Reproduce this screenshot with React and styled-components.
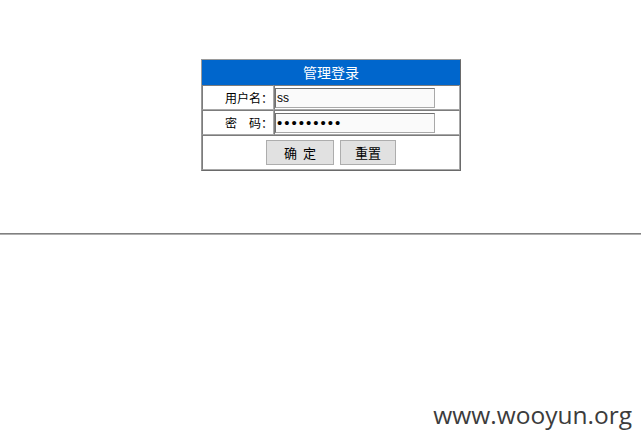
import React from "react"
import styled, { createGlobalStyle } from "styled-components"

const GlobalStyle = createGlobalStyle`
  html, body {
    margin: 0;
    padding: 0;
    background: #fff;
  }
  body {
    font-family: "Noto Sans CJK SC", "Liberation Sans", sans-serif;
  }
`

const Page = styled.div`
  position: relative;
  width: 641px;
  height: 443px;
  overflow: hidden;
`

const LoginArea = styled.div`
  padding: 59px 0 0 201px;
  height: 233px;
  box-sizing: border-box;
`

const LoginTable = styled.table`
  width: 260px;
  border: 1px solid #9a9a9a;
  border-right-color: #6a6a6a;
  border-bottom-color: #6a6a6a;
  border-spacing: 0;
  font-size: 12px;
`

const HeadCell = styled.th`
  height: 23px;
  padding: 0;
  border: 1px solid #0066cc;
  background: #0066cc;
  color: #fff;
  font-size: 14px;
  font-weight: normal;
  line-height: 23px;
`

const Cell = styled.td`
  border: 1px solid #7c7c7c;
  border-right-color: #a8a8a8;
  border-bottom-color: #a8a8a8;
  padding: 0;
  height: ${({ tall }) => (tall ? "33px" : "23px")};
  white-space: nowrap;
`

const LabelCell = styled(Cell)`
  width: 70px;
  text-align: right;
  color: #000;
`

const TextInput = styled.input`
  box-sizing: border-box;
  width: 160px;
  height: 20px;
  margin: 0;
  padding: 0 1px;
  border: 1px solid #a9a9a9;
  border-top-color: #707070;
  border-left-color: #707070;
  background: #fafafa;
  font-family: "Liberation Sans", sans-serif;
  font-size: 12px;
  color: #000;
  outline: none;
  vertical-align: middle;
`

const PasswordInput = styled(TextInput)`
  font-size: 15px;
  letter-spacing: 2px;
`

const ButtonRow = styled.div`
  display: flex;
  justify-content: center;
  gap: 6px;
`

const Button = styled.button`
  box-sizing: border-box;
  width: ${({ w }) => w}px;
  height: 25px;
  margin: 0;
  padding: 0;
  border: 1px solid #adadad;
  background: #e1e1e1;
  font-family: "Noto Sans CJK SC", sans-serif;
  font-size: 13px;
  color: #000;
  white-space: pre;
`

const Divider = styled.hr`
  margin: 0;
  border: 0;
  border-top: 1px solid #808080;
  border-bottom: 1px solid #b0b0b0;
  height: 0;
`

const Watermark = styled.div`
  position: absolute;
  right: 9px;
  bottom: 12px;
  font-family: "Open Sans", "Liberation Sans", sans-serif;
  font-size: 24.5px;
  color: #3c3c3c;
`

export default function App() {
  return (
    <Page>
      <GlobalStyle />
      <LoginArea>
        <LoginTable>
          <tbody>
            <tr>
              <HeadCell colSpan={2}>管理登录</HeadCell>
            </tr>
            <tr>
              <LabelCell>用户名：</LabelCell>
              <Cell>
                <TextInput type="text" defaultValue="ss" />
              </Cell>
            </tr>
            <tr>
              <LabelCell>密　码：</LabelCell>
              <Cell>
                <PasswordInput type="password" defaultValue="123456789" />
              </Cell>
            </tr>
            <tr>
              <Cell colSpan={2} tall>
                <ButtonRow>
                  <Button w={68}>确  定</Button>
                  <Button w={56}>重置</Button>
                </ButtonRow>
              </Cell>
            </tr>
          </tbody>
        </LoginTable>
      </LoginArea>
      <Divider />
      <Watermark>www.wooyun.org</Watermark>
    </Page>
  )
}
